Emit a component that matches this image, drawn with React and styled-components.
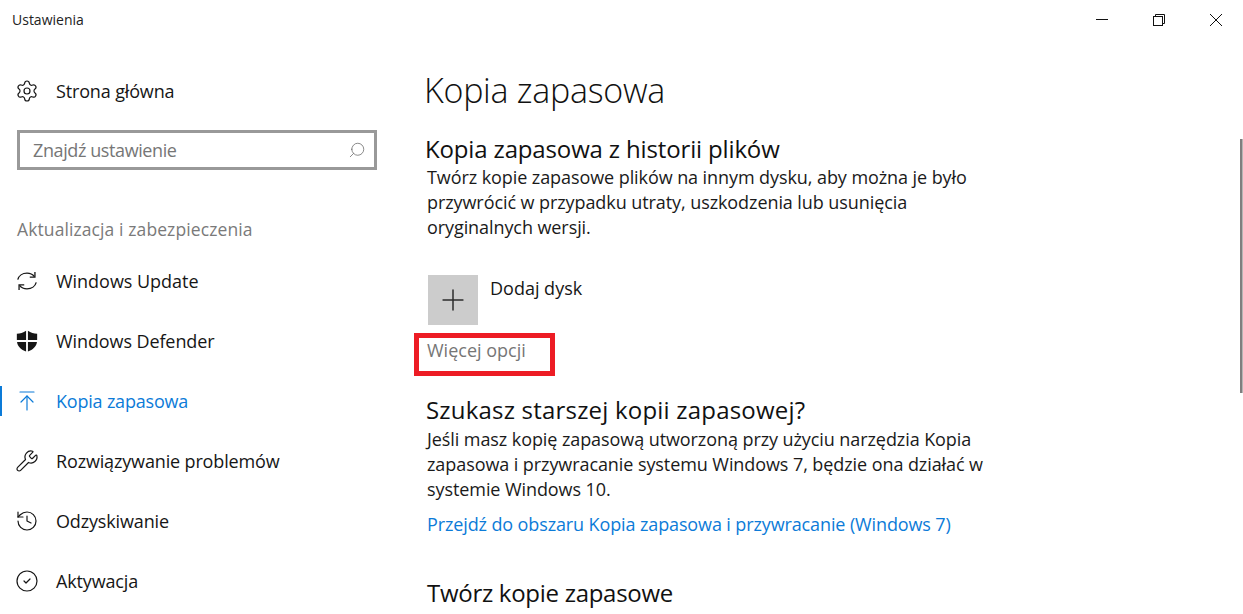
import React from "react";
import styled, { createGlobalStyle } from "styled-components";
import { Settings, Search, Wrench, History, CircleCheck, ArrowUpToLine, Plus } from "lucide-react";

const Global = createGlobalStyle`
  html, body { margin: 0; padding: 0; background: #fff; }
  body { font-family: "Open Sans", "Noto Sans", "Liberation Sans", sans-serif; color: #111; overflow: hidden; }
`;

const Page = styled.div`
  position: relative;
  width: 1243px;
  height: 614px;
  overflow: hidden;
  display: grid;
  grid-template-columns: 400px 1fr;
  background: #fff;
`;

const Sidebar = styled.aside`
  display: flex;
  flex-direction: column;
`;

const AppTitle = styled.div`
  height: 61px;
  padding: 11px 0 0 12px;
  box-sizing: border-box;
  font-size: 14px;
  line-height: 18px;
  color: #222;
`;

const NavRow = styled.div`
  position: relative;
  height: 60px;
  flex: none;
  display: flex;
  align-items: center;
  padding-left: 15px;
  gap: 17px;
  font-size: 18px;
  letter-spacing: ${p => p.$ls ?? -0.15}px;
  color: ${p => (p.$active ? "#0c7bd8" : "#161616")};
  svg { flex: none; }
  ${p => p.$active && `
    &::before {
      content: "";
      position: absolute;
      left: 0;
      top: 15px;
      width: 2px;
      height: 30px;
      background: #0c7bd8;
    }
  `}
`;

const SearchBox = styled.div`
  margin: 9px 23px 0 17px;
  height: 40px;
  box-sizing: border-box;
  border: 3px solid #999;
  display: flex;
  align-items: center;
  justify-content: space-between;
  padding: 0 8px 0 13px;
  font-size: 18px;
  letter-spacing: -0.4px;
  color: #767676;
`;

const SectionLabel = styled.div`
  margin: 44px 0 7px 17px;
  height: 30px;
  line-height: 30px;
  font-size: 17.5px;
  letter-spacing: 0.1px;
  color: #7a7a7a;
`;

const Main = styled.main`
  position: relative;
  padding: 68px 0 0 25px;
  box-sizing: border-box;
`;

const Controls = styled.div`
  position: absolute;
  top: 0;
  right: -1px;
  width: 171px;
  height: 40px;
  display: grid;
  grid-template-columns: repeat(3, 57px);
  justify-items: center;
  align-items: center;
  svg { display: block; }
`;

const Scrollbar = styled.div`
  position: absolute;
  right: 0;
  top: 139px;
  width: 2px;
  height: 254px;
  background: #7f7f7f;
  border-right: 1px solid #b5b5b5;
`;

const PageTitle = styled.h1`
  margin: 0 0 0 -1px;
  font-size: 34px;
  font-weight: 300;
  line-height: 44px;
  letter-spacing: -0.27px;
  color: #111;
`;

const SectionTitle = styled.h2`
  margin: ${p => p.$mt}px 0 0 ${p => p.$ml || 0}px;
  font-size: 24px;
  font-weight: 400;
  line-height: 30px;
  letter-spacing: ${p => p.$ls}px;
  color: #111;
`;

const Para = styled.p`
  margin: ${p => p.$mt}px 0 0 2px;
  width: 570px;
  font-size: 18px;
  line-height: 25px;
  letter-spacing: -0.08px;
  color: #1a1a1a;
`;

const AddRow = styled.div`
  margin: 35px 0 0 3px;
  display: flex;
  gap: 12px;
  height: 50px;
`;

const AddTile = styled.div`
  width: 50px;
  height: 50px;
  background: #cccccc;
  display: flex;
  align-items: center;
  justify-content: center;
  color: #2b2b2b;
`;

const AddLabel = styled.div`
  font-size: 18px;
  line-height: 26px;
  color: #161616;
`;

const MoreWrap = styled.div`
  position: relative;
  margin: 12px 0 0 2px;
  height: 26px;
  line-height: 26px;
  font-size: 18px;
  color: #767676;
`;

const Highlight = styled.div`
  position: absolute;
  left: -13px;
  top: -4px;
  width: 141px;
  height: 43px;
  box-sizing: border-box;
  border: 5px solid #ed1c24;
`;

const BlueLink = styled.div`
  margin: 9px 0 0 2px;
  font-size: 18px;
  line-height: 26px;
  letter-spacing: -0.12px;
  color: #0c7bd8;
`;

const RefreshIcon = () => (
  <svg width="24" height="24" viewBox="-2 -2 26 26" fill="none" stroke="currentColor" strokeWidth="1.4">
    <path d="M1 9.5C2 5.5 6 2.5 11 2.5c3.2 0 6.2 1.4 8 3.8" />
    <path d="M19.6 1.2v5.6H14" />
    <path d="M21 12.5c-1 4-5 7-10 7-3.2 0-6.2-1.4-8-3.8" />
    <path d="M2.4 20.8v-5.6H8" />
  </svg>
);

const ShieldIcon = () => (
  <svg width="24" height="24" viewBox="-2 -2 26 26" fill="currentColor">
    <path d="M0 3.2C3.4 3.2 7 2.2 10 0v10H0V3.2zM12 0c3 2.2 6.6 3.2 10 3.2V10H12V0zM.2 12H10v10.4C4.6 20.2.9 17 .2 12zM12 12h9.8c-.7 5-4.4 8.2-9.8 10.4V12z" />
  </svg>
);

const MinIcon = () => (
  <svg width="12" height="12" viewBox="0 0 12 12"><path d="M0 5.5h12" stroke="#111" strokeWidth="1" /></svg>
);
const RestoreIcon = () => (
  <svg width="12" height="12" viewBox="0 0 12 12" fill="none" stroke="#111" strokeWidth="1">
    <path d="M2.5 2.5V.5h9v9h-2" />
    <rect x=".5" y="2.5" width="9" height="9" fill="#fff" />
  </svg>
);
const CloseIcon = () => (
  <svg width="12" height="12" viewBox="0 0 12 12" stroke="#111" strokeWidth="1"><path d="M0 0l12 12M12 0L0 12" /></svg>
);

const navIcon = { size: 24, strokeWidth: 1.2 };

const navItems = [
  { label: "Windows Update", icon: <RefreshIcon />, ls: -0.03 },
  { label: "Windows Defender", icon: <ShieldIcon />, ls: -0.1 },
  { label: "Kopia zapasowa", icon: <ArrowUpToLine {...navIcon} />, active: true, ls: -0.2 },
  { label: "Rozwiązywanie problemów", icon: <Wrench {...navIcon} /> },
  { label: "Odzyskiwanie", icon: <History {...navIcon} /> },
  { label: "Aktywacja", icon: <CircleCheck {...navIcon} /> },
];

export default function App() {
  return (
    <Page>
      <Global />
      <Sidebar>
        <AppTitle>Ustawienia</AppTitle>
        <NavRow><Settings {...navIcon} />Strona główna</NavRow>
        <SearchBox>
          Znajdź ustawienie
          <Search size={18} strokeWidth={1} color="#666" style={{ transform: "scaleX(-1)" }} />
        </SearchBox>
        <SectionLabel>Aktualizacja i zabezpieczenia</SectionLabel>
        {navItems.map(it => (
          <NavRow key={it.label} $active={it.active} $ls={it.ls}>{it.icon}{it.label}</NavRow>
        ))}
      </Sidebar>
      <Main>
        <PageTitle>Kopia zapasowa</PageTitle>
        <SectionTitle $mt={22} $ls={-0.15}>Kopia zapasowa z historii plików</SectionTitle>
        <Para $mt={1}>Twórz kopie zapasowe plików na innym dysku, aby można je było przywrócić w przypadku utraty, uszkodzenia lub usunięcia oryginalnych wersji.</Para>
        <AddRow>
          <AddTile><Plus size={34} strokeWidth={1.05} /></AddTile>
          <AddLabel>Dodaj dysk</AddLabel>
        </AddRow>
        <MoreWrap>
          Więcej opcji
          <Highlight />
        </MoreWrap>
        <SectionTitle $mt={32} $ml={1} $ls={0.2}>Szukasz starszej kopii zapasowej?</SectionTitle>
        <Para $mt={2}>Jeśli masz kopię zapasową utworzoną przy użyciu narzędzia Kopia zapasowa i przywracanie systemu Windows 7, będzie ona działać w systemie Windows 10.</Para>
        <BlueLink>Przejdź do obszaru Kopia zapasowa i przywracanie (Windows 7)</BlueLink>
        <SectionTitle $mt={41} $ml={2} $ls={-0.28}>Twórz kopie zapasowe</SectionTitle>
        <Controls>
          <MinIcon />
          <RestoreIcon />
          <CloseIcon />
        </Controls>
        <Scrollbar />
      </Main>
    </Page>
  );
}
